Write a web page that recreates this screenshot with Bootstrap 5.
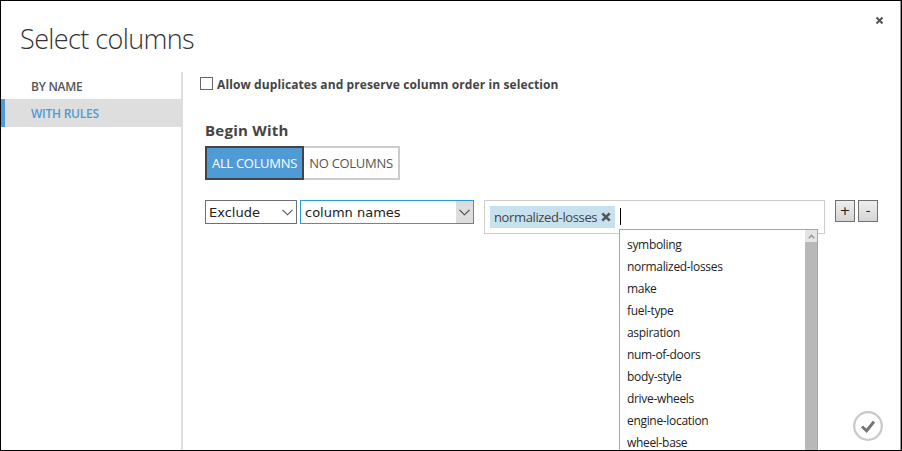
<!DOCTYPE html>
<html lang="en">
<head>
<meta charset="utf-8">
<meta name="viewport" content="width=device-width, initial-scale=1">
<title>Select columns</title>
<link href="https://cdn.jsdelivr.net/npm/bootstrap@5.3.0/dist/css/bootstrap.min.css" rel="stylesheet">
<style>
body{font-family:"Open Sans","Noto Sans",sans-serif;font-size:12px;line-height:16px;color:#444;background:#fff}
.dialog{width:902px;height:451px;border:1px solid #000;box-shadow:inset -1px 0 #999}
.dialog-head{height:71px;padding:20px 17px 0 19px}
.dialog-title{font-size:27px;font-weight:300;line-height:36px;letter-spacing:-.6px;color:#333;white-space:nowrap}
.close-btn{width:9px;height:9px;margin-top:-5px;line-height:0}
.side{width:182px;border-right:2px solid #ddd}
.side-link{height:27px;padding:1px 0 0 30px;line-height:27px;font-weight:600;color:#555;letter-spacing:-.25px;text-decoration:none}
.side-link.current{height:28px;background:#dedede;color:#4f9bd6;border-left:4px solid #4f9bd6;padding-left:26px}
.main{padding:0 16px 0 17px}
.dup-row{height:23px;padding-top:3px;font-weight:700;letter-spacing:.1px}
.dup-row .form-check-input{width:13px;height:13px;margin:-3px 4px 0 0;border:1px solid #666;border-radius:0}
.section-title{font-size:15px;line-height:20px;font-weight:700;margin:25px 0 6px 5px;letter-spacing:.25px}
.toggle{height:34px;margin-left:5px;font-size:13px}
.toggle .btn{font-size:13px;line-height:28px;padding:0;border-radius:0;border:2px solid #ccc;color:#555;letter-spacing:-.3px;white-space:nowrap}
.toggle .all{width:99px;background:#4f9bd6;border-color:#444;color:#fff}
.toggle .none{width:96px;border-left:0}
.rule-row{margin:20px 0 0 5px}
.pick{height:24px;border:1px solid #707070;font:13px/22px "DejaVu Sans",sans-serif;color:#222;padding-left:3px;white-space:nowrap}
.pick span:first-child{padding-top:1px}
.pick-a{width:92px}
.pick-b{width:174px;margin-left:3px;border-color:#2a9bd5;padding-left:4px}
.pick .arrow{width:17px}
.pick-b .arrow{background:#ddd;color:#444}
.tags{width:341px;height:34px;border:1px solid #ccc;margin-left:10px;padding:5px}
.chip{width:125px;height:22px;background:#c7e1ee;padding:0 4px;font-size:13px;line-height:22px;letter-spacing:-.37px;white-space:nowrap}
.caret-line{width:1px;height:17px;margin:2px 0 0 5px;background:#000}
.sq-pair{margin-left:10px;gap:3px}
.sq{width:20px;height:22px;padding:0;border:1px solid #707070;border-radius:0;background:linear-gradient(#eee,#d5d5d5);color:#222;font:13px/20px "DejaVu Sans",sans-serif}
.suggest{left:134px;top:28px;width:199px;height:221px;border:1px solid #a6a6a6;border-bottom:0;background:#fff;overflow:hidden}
.suggest li{height:22px;line-height:22px;color:#222;letter-spacing:-.32px}
.suggest ul{padding:4px 0 0 7px}
.track{width:12px;background:#b8b8b8}
.track-up{height:12px;background:#e5e5e5;line-height:0}
.ok{left:852px;top:410px;width:31px;height:31px}
</style>
<script src="https://cdn.jsdelivr.net/npm/bootstrap@5.3.0/dist/js/bootstrap.bundle.min.js"></script>
</head>
<body>
<div class="dialog d-flex flex-column position-relative overflow-hidden">
  <header class="dialog-head d-flex justify-content-between align-items-start flex-shrink-0">
    <h1 class="dialog-title m-0">Select columns</h1>
    <button class="close-btn btn p-0 border-0" aria-label="Close"><svg width="9" height="9" viewBox="0 0 9 9"><path d="M1.5 1.5l6 6M7.5 1.5l-6 6" stroke="#555" stroke-width="2"/></svg></button>
  </header>
  <div class="d-flex flex-grow-1">
    <nav class="side flex-shrink-0 d-flex flex-column">
      <a class="side-link" href="#">BY NAME</a>
      <a class="side-link current" href="#">WITH RULES</a>
    </nav>
    <main class="main flex-grow-1">
      <label class="dup-row d-flex align-items-center"><input class="form-check-input" type="checkbox"><span class="dup-text">Allow duplicates and preserve column order in selection</span></label>
      <h2 class="section-title">Begin With</h2>
      <div class="toggle d-flex">
        <button class="btn all">ALL COLUMNS</button><button class="btn none">NO COLUMNS</button>
      </div>
      <div class="rule-row d-flex align-items-start">
        <div class="pick pick-a d-flex justify-content-between"><span>Exclude</span><span class="arrow d-flex align-items-center justify-content-center"><svg width="11" height="7" viewBox="0 0 11 7"><path d="M.5.8l5 5 5-5" fill="none" stroke="#555" stroke-width="1.1"/></svg></span></div>
        <div class="pick pick-b d-flex justify-content-between"><span>column names</span><span class="arrow d-flex align-items-center justify-content-center"><svg width="11" height="7" viewBox="0 0 11 7"><path d="M.5.8l5 5 5-5" fill="none" stroke="#444" stroke-width="1.1"/></svg></span></div>
        <div class="tags d-flex position-relative">
          <span class="chip d-flex justify-content-between align-items-center"><span>normalized-losses</span><svg width="10" height="10" viewBox="0 0 10 10"><path d="M1.3 1.3l7.4 7.4M8.7 1.3L1.3 8.7" stroke="#555" stroke-width="2.6"/></svg></span>
          <span class="caret-line"></span>
          <div class="suggest position-absolute d-flex">
            <ul class="list-unstyled m-0 flex-grow-1">
              <li>symboling</li><li>normalized-losses</li><li>make</li><li>fuel-type</li><li>aspiration</li><li>num-of-doors</li><li>body-style</li><li>drive-wheels</li><li>engine-location</li><li>wheel-base</li>
            </ul>
            <div class="track"><div class="track-up d-flex align-items-center justify-content-center"><svg width="7" height="5" viewBox="0 0 7 5"><path d="M.7 4.2L3.5 1.4l2.8 2.8" fill="none" stroke="#999" stroke-width="1.5"/></svg></div></div>
          </div>
        </div>
        <div class="sq-pair d-flex">
          <button class="sq btn">+</button><button class="sq btn">-</button>
        </div>
      </div>
    </main>
  </div>
  <button class="ok btn p-0 border-0 position-absolute d-flex" aria-label="Confirm"><svg width="30" height="31" viewBox="0 0 30 31"><circle cx="15" cy="15" r="13.8" fill="none" stroke="#c8c8c8" stroke-width="2.2"/><path d="M9 15.5l4.6 4.3 7.4-9.2" fill="none" stroke="#757575" stroke-width="3"/></svg></button>
</div>
</body>
</html>
